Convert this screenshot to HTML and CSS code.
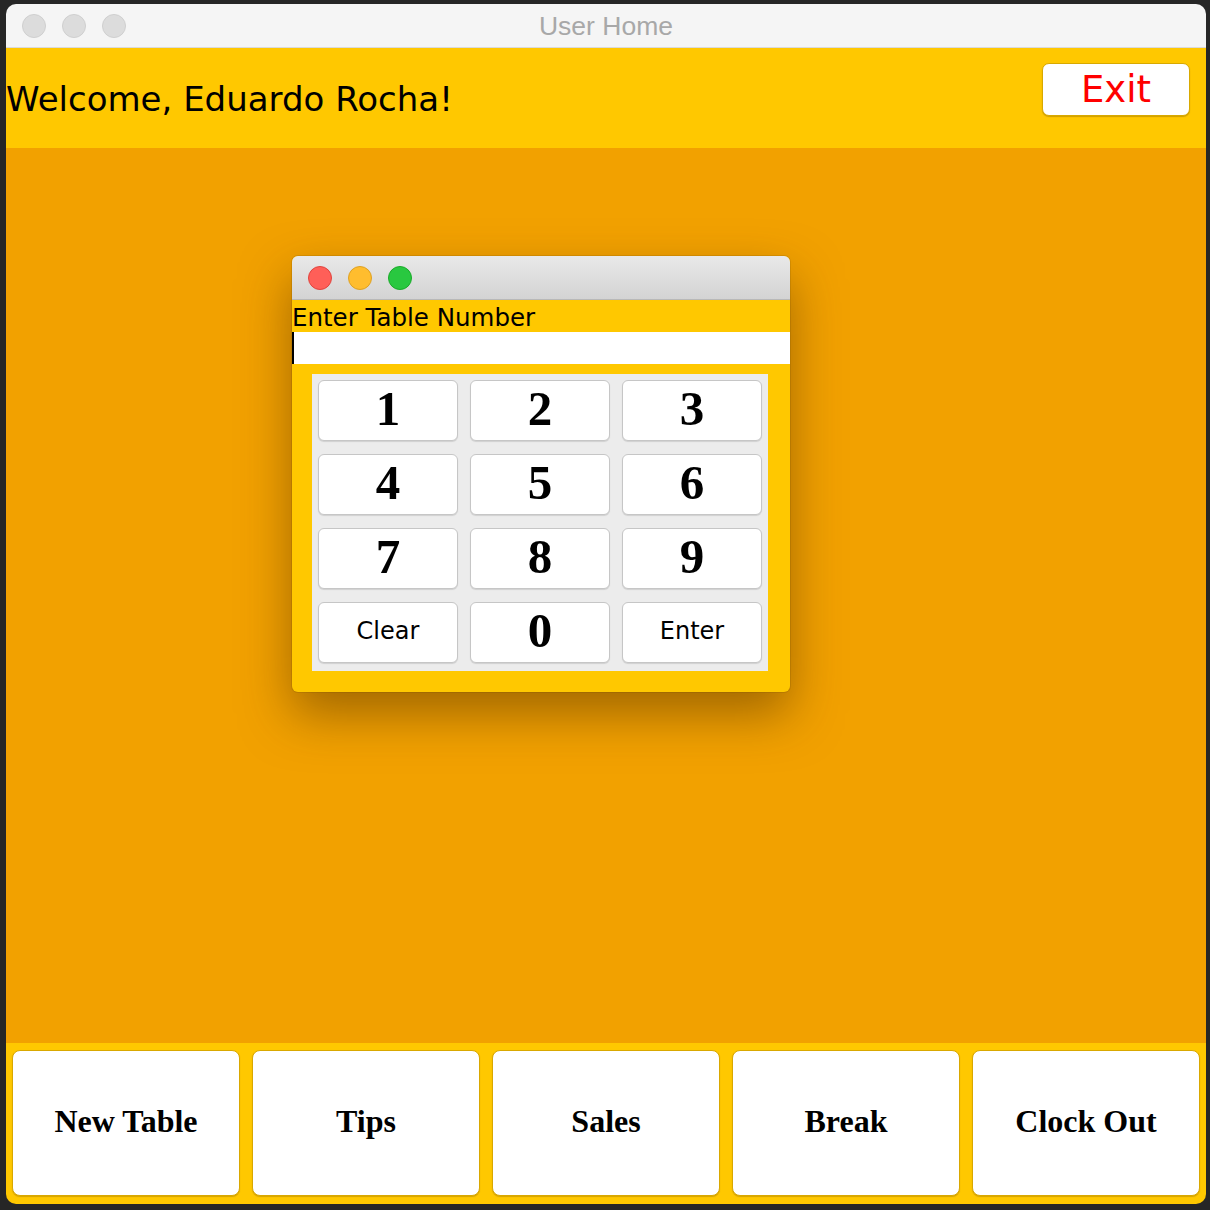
FILE: index.html
```html
<!DOCTYPE html>
<html>
<head>
<meta charset="utf-8">
<title>User Home</title>
<link rel="stylesheet" href="styles.css">
</head>
<body>
<div class="window">
  <div class="titlebar">
    <div class="lights">
      <span class="light gray"></span>
      <span class="light gray"></span>
      <span class="light gray"></span>
    </div>
    <div class="title">User Home</div>
    <div></div>
  </div>
  <div class="header">
    <div class="welcome">Welcome, Eduardo Rocha!</div>
    <button class="exit">Exit</button>
  </div>
  <div class="main">
    <div class="dialog">
      <div class="dlg-titlebar">
        <span class="light red"></span>
        <span class="light yellow"></span>
        <span class="light green"></span>
      </div>
      <div class="dlg-label">Enter Table Number</div>
      <div class="dlg-field"></div>
      <div class="keypad">
        <button class="key num">1</button>
        <button class="key num">2</button>
        <button class="key num">3</button>
        <button class="key num">4</button>
        <button class="key num">5</button>
        <button class="key num">6</button>
        <button class="key num">7</button>
        <button class="key num">8</button>
        <button class="key num">9</button>
        <button class="key word">Clear</button>
        <button class="key num">0</button>
        <button class="key word">Enter</button>
      </div>
    </div>
  </div>
  <div class="bottom">
    <button class="big">New Table</button>
    <button class="big">Tips</button>
    <button class="big">Sales</button>
    <button class="big">Break</button>
    <button class="big">Clock Out</button>
  </div>
</div>
</body>
</html>
```
FILE: styles.css
```css
* { box-sizing: border-box; }
html, body { margin: 0; padding: 0; }
body {
  background: #262626;
  width: 1210px;
  height: 1210px;
  overflow: hidden;
  font-family: "DejaVu Sans", sans-serif;
}
button { font: inherit; color: inherit; cursor: default; }

.window {
  margin: 4px 0 0 6px;
  width: 1200px;
  height: 1200px;
  border-radius: 10px;
  overflow: hidden;
  display: flex;
  flex-direction: column;
}

.titlebar {
  height: 44px;
  flex: none;
  background: #f5f5f5;
  border-bottom: 1px solid #dadada;
  display: grid;
  grid-template-columns: 1fr auto 1fr;
  align-items: center;
}
.lights {
  display: flex;
  gap: 16px;
  padding-left: 16px;
}
.light {
  width: 24px;
  height: 24px;
  border-radius: 50%;
  display: block;
}
.light.gray { background: #dcdcdc; border: 1px solid #cfcfcf; }
.light.red { background: #ff5f58; border: 1px solid #e0443e; }
.light.yellow { background: #ffbd2e; border: 1px solid #dea123; }
.light.green { background: #29c840; border: 1px solid #1aab29; }
.title {
  font-family: "Liberation Sans", sans-serif;
  font-size: 26.5px;
  color: #a8a8a8;
  padding-top: 1px;
}

.header {
  height: 100px;
  flex: none;
  background: #ffc800;
  display: flex;
  justify-content: space-between;
  align-items: center;
}
.welcome {
  font-size: 34px;
  color: #000;
  margin-top: 2px;
  white-space: nowrap;
}
.exit {
  align-self: flex-start;
  margin: 15px 16px 0 0;
  width: 148px;
  height: 53px;
  background: #fff;
  border: 1px solid #d8a900;
  border-radius: 7px;
  box-shadow: 0 1px 1px rgba(120, 80, 0, 0.35);
  color: #ff0000;
  font-size: 37px;
  padding: 0;
  line-height: 50px;
}

.main {
  flex: 1;
  background: #f2a100;
  position: relative;
}
.dialog {
  position: absolute;
  left: 286px;
  top: 108px;
  width: 498px;
  border-radius: 6px;
  overflow: hidden;
  background: #ffc800;
  box-shadow: 0 22px 50px rgba(80, 45, 0, 0.5), 0 0 0 1px rgba(180, 120, 0, 0.35);
}
.dlg-titlebar {
  height: 44px;
  background: linear-gradient(#e9e9e9, #d3d3d3);
  border-bottom: 1px solid #b8b8b8;
  display: flex;
  align-items: center;
  gap: 16px;
  padding-left: 16px;
}
.dlg-label {
  height: 32px;
  line-height: 35px;
  font-size: 24.5px;
  color: #000;
  white-space: nowrap;
}
.dlg-field {
  height: 32px;
  background: #fff;
  border-left: 2px solid #000;
}
.keypad {
  margin: 10px 22px 21px 20px;
  background: #ececec;
  padding: 6px 6px 8px 6px;
  display: grid;
  grid-template-columns: repeat(3, 140px);
  grid-auto-rows: 61px;
  column-gap: 12px;
  row-gap: 13px;
}
.key {
  background: #fff;
  border: 1px solid #c6c6c6;
  border-radius: 6px;
  box-shadow: 0 1px 1px rgba(0, 0, 0, 0.12);
  padding: 0;
  display: flex;
  align-items: center;
  justify-content: center;
  color: #000;
}
.key.num {
  font-family: "Liberation Serif", serif;
  font-weight: bold;
  font-size: 49px;
  padding-bottom: 5px;
}
.key.word {
  font-family: "DejaVu Sans", sans-serif;
  font-size: 24px;
  padding-bottom: 3px;
}

.bottom {
  height: 161px;
  flex: none;
  background: #ffc800;
  display: flex;
  gap: 12px;
  padding: 7px 6px 8px 6px;
}
.big {
  flex: 1;
  background: #fff;
  border: 1px solid #d9a800;
  border-radius: 8px;
  box-shadow: 0 1px 1px rgba(120, 80, 0, 0.3);
  font-family: "Liberation Serif", serif;
  font-weight: bold;
  font-size: 32px;
  color: #000;
  padding: 0 0 4px 0;
}
```
